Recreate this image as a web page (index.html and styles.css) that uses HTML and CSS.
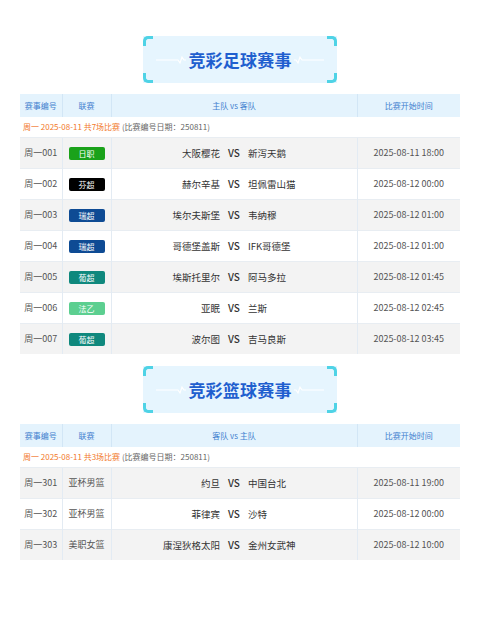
FILE: index.html
```html
<!DOCTYPE html>
<html lang="zh">
<head>
<meta charset="utf-8">
<link rel="stylesheet" href="styles.css">
</head>
<body>
<div class="page">
  <section class="block">
    <div class="title-wrap">
      <div class="title">
        <span class="corner tl"></span><span class="corner tr"></span><span class="corner bl"></span><span class="corner br"></span>
        <svg class="beat" width="30" height="10" viewBox="0 0 30 10"><path d="M0 5 H22 L24 8 L26 2 L28 5 H30" fill="none" stroke="#ffffff" stroke-width="1.2"/></svg>
        <span class="title-text">竞彩足球赛事</span>
        <svg class="beat" width="30" height="10" viewBox="0 0 30 10"><path d="M0 5 H2 L4 8 L6 2 L8 5 H30" fill="none" stroke="#ffffff" stroke-width="1.2"/></svg>
      </div>
    </div>
    <table class="games">
      <colgroup><col class="c1"><col class="c2"><col class="c3"><col class="c4"></colgroup>
      <thead>
        <tr><th>赛事编号</th><th>联赛</th><th>主队 vs 客队</th><th>比赛开始时间</th></tr>
      </thead>
      <tbody>
        <tr class="date-row"><td colspan="4"><span class="hl">周一 2025-08-11 共7场比赛</span> <span class="note">(比赛编号日期：250811)</span></td></tr>
        <tr class="odd"><td class="num">周一001</td><td><span class="badge green">日职</span></td><td><div class="vs"><span class="home">大阪樱花</span><b>VS</b><span class="away">新泻天鹅</span></div></td><td class="time">2025-08-11 18:00</td></tr>
        <tr><td class="num">周一002</td><td><span class="badge black">芬超</span></td><td><div class="vs"><span class="home">赫尔辛基</span><b>VS</b><span class="away">坦佩雷山猫</span></div></td><td class="time">2025-08-12 00:00</td></tr>
        <tr class="odd"><td class="num">周一003</td><td><span class="badge navy">瑞超</span></td><td><div class="vs"><span class="home">埃尔夫斯堡</span><b>VS</b><span class="away">韦纳穆</span></div></td><td class="time">2025-08-12 01:00</td></tr>
        <tr><td class="num">周一004</td><td><span class="badge navy">瑞超</span></td><td><div class="vs"><span class="home">哥德堡盖斯</span><b>VS</b><span class="away">IFK哥德堡</span></div></td><td class="time">2025-08-12 01:00</td></tr>
        <tr class="odd"><td class="num">周一005</td><td><span class="badge teal">葡超</span></td><td><div class="vs"><span class="home">埃斯托里尔</span><b>VS</b><span class="away">阿马多拉</span></div></td><td class="time">2025-08-12 01:45</td></tr>
        <tr><td class="num">周一006</td><td><span class="badge mint">法乙</span></td><td><div class="vs"><span class="home">亚眠</span><b>VS</b><span class="away">兰斯</span></div></td><td class="time">2025-08-12 02:45</td></tr>
        <tr class="odd"><td class="num">周一007</td><td><span class="badge teal">葡超</span></td><td><div class="vs"><span class="home">波尔图</span><b>VS</b><span class="away">吉马良斯</span></div></td><td class="time">2025-08-12 03:45</td></tr>
      </tbody>
    </table>
  </section>

  <section class="block">
    <div class="title-wrap">
      <div class="title">
        <span class="corner tl"></span><span class="corner tr"></span><span class="corner bl"></span><span class="corner br"></span>
        <svg class="beat" width="30" height="10" viewBox="0 0 30 10"><path d="M0 5 H22 L24 8 L26 2 L28 5 H30" fill="none" stroke="#ffffff" stroke-width="1.2"/></svg>
        <span class="title-text">竞彩篮球赛事</span>
        <svg class="beat" width="30" height="10" viewBox="0 0 30 10"><path d="M0 5 H2 L4 8 L6 2 L8 5 H30" fill="none" stroke="#ffffff" stroke-width="1.2"/></svg>
      </div>
    </div>
    <table class="games">
      <colgroup><col class="c1"><col class="c2"><col class="c3"><col class="c4"></colgroup>
      <thead>
        <tr><th>赛事编号</th><th>联赛</th><th>客队 vs 主队</th><th>比赛开始时间</th></tr>
      </thead>
      <tbody>
        <tr class="date-row"><td colspan="4"><span class="hl">周一 2025-08-11 共3场比赛</span> <span class="note">(比赛编号日期：250811)</span></td></tr>
        <tr class="odd"><td class="num">周一301</td><td class="league">亚杯男篮</td><td><div class="vs"><span class="home">约旦</span><b>VS</b><span class="away">中国台北</span></div></td><td class="time">2025-08-11 19:00</td></tr>
        <tr><td class="num">周一302</td><td class="league">亚杯男篮</td><td><div class="vs"><span class="home">菲律宾</span><b>VS</b><span class="away">沙特</span></div></td><td class="time">2025-08-12 00:00</td></tr>
        <tr class="odd"><td class="num">周一303</td><td class="league">美职女篮</td><td><div class="vs"><span class="home">康涅狄格太阳</span><b>VS</b><span class="away">金州女武神</span></div></td><td class="time">2025-08-12 10:00</td></tr>
      </tbody>
    </table>
  </section>
</div>
</body>
</html>
```

FILE: styles.css
```css
* { box-sizing: border-box; }
html, body { margin: 0; padding: 0; background: #ffffff; }
body {
  font-family: "Noto Sans CJK SC", "Noto Sans", sans-serif;
  color: #333333;
}
.page {
  width: 480px;
  padding: 36px 20px 0 20px;
  display: flex;
  flex-direction: column;
  gap: 12px;
}
.block {
  display: flex;
  flex-direction: column;
  gap: 11px;
}
.title-wrap {
  display: flex;
  justify-content: center;
}
.title {
  position: relative;
  width: 194px;
  height: 47px;
  background: #e6f5fe;
  display: flex;
  align-items: center;
  justify-content: center;
  gap: 2px;
}
.title-text {
  font-size: 17px;
  font-weight: 700;
  color: #1f5fcf;
  letter-spacing: 0.2px;
}
.beat { display: block; }
.corner {
  position: absolute;
  width: 10px;
  height: 10px;
  border-color: #4fd3e6;
  border-style: solid;
  border-width: 0;
}
.corner.tl { left: 0; top: 0; border-left-width: 3px; border-top-width: 3px; border-top-left-radius: 5px; }
.corner.tr { right: 0; top: 0; border-right-width: 3px; border-top-width: 3px; border-top-right-radius: 5px; }
.corner.bl { left: 0; bottom: 0; border-left-width: 3px; border-bottom-width: 3px; border-bottom-left-radius: 5px; }
.corner.br { right: 0; bottom: 0; border-right-width: 3px; border-bottom-width: 3px; border-bottom-right-radius: 5px; }

.games {
  width: 440px;
  border-collapse: collapse;
  table-layout: fixed;
  font-size: 9px;
}
.c1 { width: 42px; }
.c2 { width: 49px; }
.c3 { width: 246px; }
.c4 { width: 103px; }
.games th {
  height: 23px;
  background: #e4f3fd;
  color: #3f7fcf;
  font-weight: 400;
  font-size: 8px;
  text-align: center;
  border-left: 1px solid #d2e6f6;
  padding: 0;
}
.games th:first-child { border-left: none; }
.games td {
  height: 31px;
  padding: 0;
  text-align: center;
  border-left: 1px solid #e3ebf3;
  border-top: 1px solid #e8edf2;
  color: #555555;
}
.games td:first-child { border-left: none; }
.games tr.odd td { background: #f3f3f3; }
.games tr.date-row td {
  height: 20px;
  text-align: left;
  padding-left: 3px;
  border: none;
  background: #ffffff;
  font-size: 8px;
}
.hl { color: #f2782a; }
.note { color: #666666; }
.num { color: #666666; }
.league { color: #555555; }
.time { color: #666666; }
.badge {
  display: inline-block;
  width: 36px;
  height: 13px;
  line-height: 13px;
  border-radius: 2px;
  color: #ffffff;
  font-size: 8px;
  vertical-align: middle;
}
.badge.green { background: #1aa21a; }
.badge.black { background: #000000; }
.badge.navy { background: #0e4b94; }
.badge.teal { background: #0f887d; }
.badge.mint { background: #5ccf90; }
.vs {
  display: grid;
  grid-template-columns: 1fr auto 1fr;
  column-gap: 8px;
  align-items: center;
  font-size: 9.5px;
  color: #333333;
}
.vs .home { text-align: right; }
.vs .away { text-align: left; }
.vs b { font-weight: 500; color: #333333; font-size: 10px; }
```
